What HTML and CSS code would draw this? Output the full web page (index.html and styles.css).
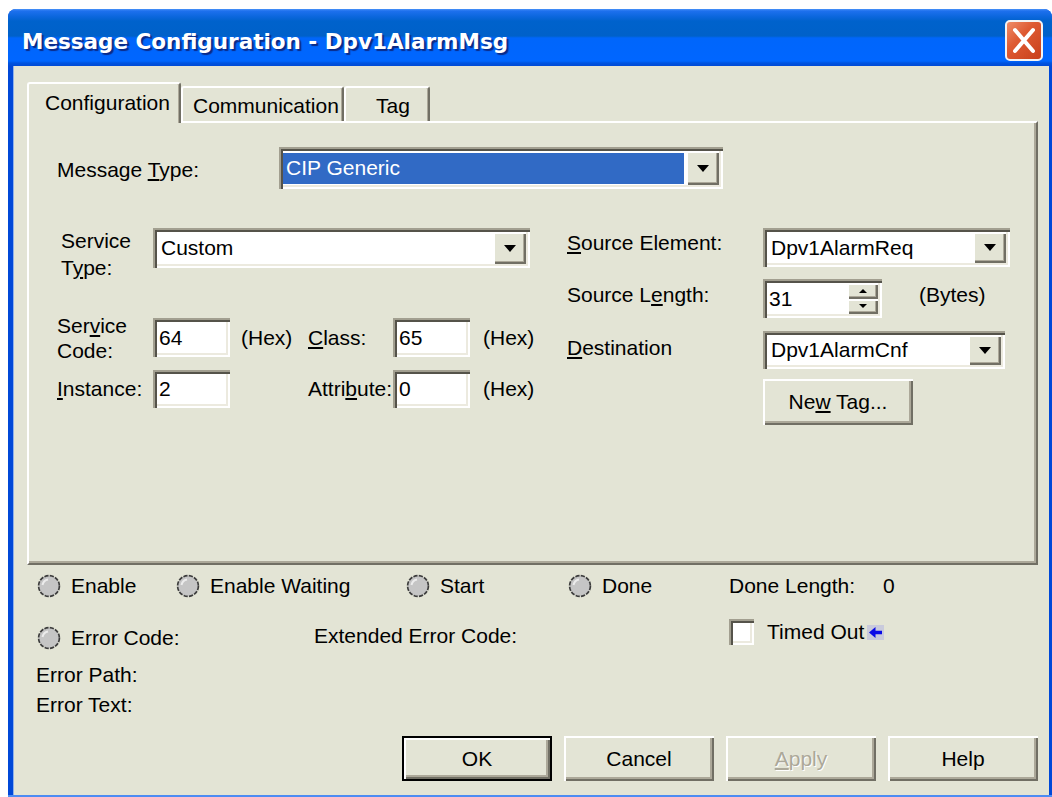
FILE: index.html
```html
<!DOCTYPE html>
<html lang="en">
<head>
<meta charset="utf-8">
<title>Message Configuration - Dpv1AlarmMsg</title>
<link rel="stylesheet" href="styles.css">
</head>
<body>
<div class="window">
  <div class="titlebar">
    <div class="title">Message Configuration - Dpv1AlarmMsg</div>
    <div class="close-btn">
      <svg width="34" height="37" viewBox="0 0 34 37"><path d="M8 8 L26 29 M26 8 L8 29" stroke="#fff" stroke-width="4" stroke-linecap="round"/></svg>
    </div>
  </div>
  <div class="client">
    <div class="tabs">
      <div class="tab tab-active tab-config">Configuration</div>
      <div class="tab tab-comm">Communication</div>
      <div class="tab tab-tag">Tag</div>
    </div>
    <div class="panel">
      <div class="msg-row">
        <div class="msg-label">Message <u>T</u>ype:</div>
        <div class="combo msg-combo">
          <div class="combo-value selected">CIP Generic</div>
          <div class="drop-btn"><span class="tri-down"></span></div>
        </div>
      </div>
      <div class="columns">
        <div class="col-left">
          <div class="lrow row-st">
            <div class="lbl lbl-st">Service<br>T<u>y</u>pe:</div>
            <div class="combo st-combo">
              <div class="combo-value">Custom</div>
              <div class="drop-btn"><span class="tri-down"></span></div>
            </div>
          </div>
          <div class="lrow row-sc">
            <div class="lbl lbl-sc">Ser<u>v</u>ice<br>Code:</div>
            <div class="edit">64</div>
            <div class="unit">(Hex)</div>
            <div class="lbl2"><u>C</u>lass:</div>
            <div class="edit">65</div>
            <div class="unit2">(Hex)</div>
          </div>
          <div class="lrow row-in">
            <div class="lbl"><u>I</u>nstance:</div>
            <div class="edit">2</div>
            <div class="unit"></div>
            <div class="lbl2">Attri<u>b</u>ute:</div>
            <div class="edit">0</div>
            <div class="unit2">(Hex)</div>
          </div>
        </div>
        <div class="col-right">
          <div class="rrow row-se">
            <div class="rlbl"><u>S</u>ource Element:</div>
            <div class="combo se-combo">
              <div class="combo-value">Dpv1AlarmReq</div>
              <div class="drop-btn"><span class="tri-down"></span></div>
            </div>
          </div>
          <div class="rrow row-sl">
            <div class="rlbl">Source L<u>e</u>ngth:</div>
            <div class="spin">
              <div class="spin-value">31</div>
              <div class="spin-btns">
                <div class="spin-btn"><span class="tri-up"></span></div>
                <div class="spin-btn"><span class="tri-down-sm"></span></div>
              </div>
            </div>
            <div class="bytes">(Bytes)</div>
          </div>
          <div class="rrow row-dest">
            <div class="rlbl"><u>D</u>estination</div>
            <div class="combo dest-combo">
              <div class="combo-value">Dpv1AlarmCnf</div>
              <div class="drop-btn"><span class="tri-down"></span></div>
            </div>
          </div>
          <div class="btn newtag"><span>Ne<u>w</u> Tag...</span></div>
        </div>
      </div>
    </div>

    <div class="status">
      <div class="srow1">
        <div class="sitem s-enable"><svg class="radio" width="24" height="24" viewBox="0 0 24 24"><circle cx="12" cy="12" r="10.4" fill="#c5c5c5" stroke="#3c3c3c" stroke-width="1.7" stroke-dasharray="4.2 1.3"/><path d="M5.5 11 A7 7 0 0 1 11 5.5" stroke="#ececec" stroke-width="2" fill="none"/></svg>Enable</div>
        <div class="sitem s-waiting"><svg class="radio" width="24" height="24" viewBox="0 0 24 24"><circle cx="12" cy="12" r="10.4" fill="#c5c5c5" stroke="#3c3c3c" stroke-width="1.7" stroke-dasharray="4.2 1.3"/><path d="M5.5 11 A7 7 0 0 1 11 5.5" stroke="#ececec" stroke-width="2" fill="none"/></svg>Enable Waiting</div>
        <div class="sitem s-start"><svg class="radio" width="24" height="24" viewBox="0 0 24 24"><circle cx="12" cy="12" r="10.4" fill="#c5c5c5" stroke="#3c3c3c" stroke-width="1.7" stroke-dasharray="4.2 1.3"/><path d="M5.5 11 A7 7 0 0 1 11 5.5" stroke="#ececec" stroke-width="2" fill="none"/></svg>Start</div>
        <div class="sitem s-done"><svg class="radio" width="24" height="24" viewBox="0 0 24 24"><circle cx="12" cy="12" r="10.4" fill="#c5c5c5" stroke="#3c3c3c" stroke-width="1.7" stroke-dasharray="4.2 1.3"/><path d="M5.5 11 A7 7 0 0 1 11 5.5" stroke="#ececec" stroke-width="2" fill="none"/></svg>Done</div>
        <div class="sitem">Done Length:<span class="done-len">0</span></div>
      </div>
      <div class="srow2">
        <div class="sitem s-error"><svg class="radio" width="24" height="24" viewBox="0 0 24 24"><circle cx="12" cy="12" r="10.4" fill="#c5c5c5" stroke="#3c3c3c" stroke-width="1.7" stroke-dasharray="4.2 1.3"/><path d="M5.5 11 A7 7 0 0 1 11 5.5" stroke="#ececec" stroke-width="2" fill="none"/></svg>Error Code:</div>
        <div class="s-ext">Extended Error Code:</div>
        <div class="checkbox"></div>
        <div class="s-timed">Timed Out</div>
        <svg class="hint" width="17" height="15" viewBox="0 0 17 15"><rect width="17" height="15" fill="#c9cadc"/><path d="M2 7.5 L8.5 2 L8.5 5.8 L15 5.8 L15 9.2 L8.5 9.2 L8.5 13 Z" fill="#0a0ae6"/></svg>
      </div>
      <div class="srow3">Error Path:</div>
      <div class="srow4">Error Text:</div>
    </div>

    <div class="buttons">
      <div class="btn btn-default">OK</div>
      <div class="btn">Cancel</div>
      <div class="btn btn-disabled"><span><u>A</u>pply</span></div>
      <div class="btn">Help</div>
    </div>
  </div>
</div>
</body>
</html>
```

FILE: styles.css
```css
* { box-sizing: border-box; }

html, body {
  margin: 0;
  padding: 0;
  background: #fff;
}

body {
  font-family: "Liberation Sans", Arial, sans-serif;
  font-size: 21px;
  color: #000;
}

u {
  text-decoration-thickness: 1.5px;
  text-underline-offset: 2px;
}

/* ---------- window frame ---------- */
.window {
  margin: 9px 0 0 8px;
  width: 1044px;
  height: 788px;
  display: flex;
  flex-direction: column;
  background: #0048d8;
  border-bottom: 2px solid #4d8cf2;
  border-radius: 8px 8px 0 0;
  overflow: hidden;
}

.titlebar {
  flex: none;
  height: 57px;
  display: flex;
  align-items: flex-start;
  padding: 0 9px 0 14px;
  background: linear-gradient(to bottom,
    #4a93f8 0, #1d70ee 2px, #0a66dc 8px, #0062cc 12px,
    #0061c9 27px, #0066fb 29px, #0066ff 52px,
    #0054e0 54px, #004ad6 57px);
}

.title {
  flex: 1;
  margin-top: 20px;
  font-family: "DejaVu Sans", sans-serif;
  font-weight: bold;
  font-size: 21.5px;
  line-height: 26px;
  color: #fff;
  white-space: nowrap;
  text-shadow: 2px 2px 1px #0b2a86;
}

.close-btn {
  margin-top: 11px;
  width: 38px;
  height: 41px;
  border: 2px solid #f4f4f4;
  border-radius: 5px;
  background: linear-gradient(135deg, #ef8c68 0%, #de5a32 40%, #c8401c 100%);
  display: flex;
  align-items: center;
  justify-content: center;
}

.client {
  flex: 1;
  margin: 0 3px 0 5px;
  border-left: 1px solid #8fb0ea;
  background: #e3e4d5;
  padding: 16px 11px 0 13px;
  display: flex;
  flex-direction: column;
}

/* ---------- tabs ---------- */
.tabs {
  flex: none;
  height: 39px;
  display: flex;
  align-items: flex-end;
  position: relative;
  z-index: 1;
}

.tab {
  height: 35px;
  border-top: 2px solid #fff;
  border-left: 2px solid #fff;
  border-right: 2px solid #716f64;
  border-radius: 3px 3px 0 0;
  box-shadow: inset -1px 0 0 #aca899;
  background: #e3e4d5;
  padding-top: 4.8px;
  line-height: 26px;
  white-space: nowrap;
}

.tab-active {
  height: 41px;
  margin-bottom: -2px;
  padding-top: 5.5px;
}

.tab-config { width: 154px; padding-left: 16px; }
.tab-comm { width: 163px; padding-left: 10px; }
.tab-tag { width: 86px; padding-left: 30px; }

.panel {
  flex: none;
  height: 444px;
  border: 2px solid;
  border-color: #fff #716f64 #716f64 #fff;
  box-shadow: inset -2px -2px 0 #aca899;
  padding: 24px 0 0 28px;
}

/* ---------- shared controls ---------- */
.combo,
.edit,
.spin,
.checkbox {
  background: #fff;
  box-shadow:
    inset 2px 2px 0 #a29f90,
    inset 4px 4px 0 #55534a,
    inset -2px -2px 0 #fff,
    inset -4px -4px 0 #eceadf;
}

.combo {
  display: flex;
  padding: 4px;
}

.combo-value {
  flex: 1;
  display: flex;
  align-items: center;
  padding-left: 4px;
  white-space: nowrap;
}

.combo-value.selected {
  background: #316ac5;
  color: #fff;
  margin: 1.5px 2px 1.5px 0;
  padding-left: 3px;
}

.drop-btn,
.spin-btn {
  background: #e3e4d5;
  box-shadow:
    inset 2px 2px 0 #fff,
    inset -2px -2px 0 #716f64,
    inset -3px -3px 0 #aca899;
  display: flex;
  align-items: center;
  justify-content: center;
}

.drop-btn { width: 33px; }

.tri-down {
  width: 0;
  height: 0;
  border-left: 6px solid transparent;
  border-right: 6px solid transparent;
  border-top: 7px solid #000;
}

.tri-up {
  width: 0;
  height: 0;
  border-left: 4px solid transparent;
  border-right: 4px solid transparent;
  border-bottom: 4px solid #000;
}

.tri-down-sm {
  width: 0;
  height: 0;
  border-left: 4px solid transparent;
  border-right: 4px solid transparent;
  border-top: 4px solid #000;
}

.edit {
  width: 77px;
  height: 39px;
  padding-left: 6px;
  line-height: 39px;
}

.btn {
  width: 150px;
  height: 45px;
  display: flex;
  align-items: center;
  justify-content: center;
  background: #e3e4d5;
  box-shadow:
    inset 2px 2px 0 #fff,
    inset -2px -2px 0 #716f64,
    inset -4px -4px 0 #aca899;
  white-space: nowrap;
}

.btn-default {
  border: 2px solid #000;
}

.btn-disabled {
  color: #aca899;
  text-shadow: 1px 1px 0 #fff;
}

/* ---------- message type ---------- */
.msg-row {
  display: flex;
  align-items: center;
  height: 42px;
}

.msg-label {
  width: 222px;
  margin-top: 4px;
}

.msg-combo {
  width: 444px;
  height: 42px;
}

.columns {
  display: flex;
  margin-top: 39px;
}

/* ---------- left column ---------- */
.col-left { width: 510px; }

.lrow {
  display: flex;
  align-items: center;
}

.lbl {
  width: 96px;
  white-space: nowrap;
}

.row-st {
  height: 40px;
  align-items: flex-start;
}

.lbl-st {
  padding-left: 4px;
  line-height: 26.5px;
}

.st-combo {
  width: 377px;
  height: 40px;
}

.row-sc {
  margin-top: 50px;
  height: 39px;
}

.lbl-sc {
  align-self: flex-start;
  margin-top: -5.5px;
  line-height: 25.5px;
}

.row-in {
  margin-top: 13px;
  height: 38px;
}

.row-in .edit {
  height: 38px;
  line-height: 38px;
}

.unit {
  width: 78px;
  padding-left: 11px;
}

.lbl2 {
  width: 85px;
  white-space: nowrap;
}

.unit2 {
  padding-left: 13px;
}

/* ---------- right column ---------- */
.col-right { flex: 1; }

.rrow {
  display: flex;
  align-items: flex-start;
}

.rlbl {
  width: 196px;
  line-height: 26px;
  white-space: nowrap;
}

.row-se .rlbl { margin-top: 2px; }

.se-combo {
  width: 247px;
  height: 39px;
}

.row-sl { margin-top: 12px; }
.row-sl .rlbl { margin-top: 3px; }

.spin {
  width: 119px;
  height: 39px;
  display: flex;
  padding: 4px;
}

.spin-value {
  flex: 1;
  padding-left: 2px;
  line-height: 31px;
}

.spin-btns {
  width: 31px;
  display: flex;
  flex-direction: column;
}

.spin-btn { flex: 1; }

.bytes {
  margin: 3px 0 0 37px;
  line-height: 26px;
}

.row-dest { margin-top: 13px; }
.row-dest .rlbl { margin-top: 3.5px; }

.dest-combo {
  width: 242px;
  height: 38px;
}

.newtag {
  margin: 10px 0 0 196px;
  height: 46px;
}

/* ---------- status area ---------- */
.status {
  padding-left: 9px;
  display: flex;
  flex-direction: column;
}

.srow1 {
  display: flex;
  align-items: center;
  height: 24px;
  margin-top: 9px;
}

.sitem {
  display: flex;
  align-items: center;
  gap: 10px;
  line-height: 26px;
  white-space: nowrap;
}

.radio { flex: none; }

.s-enable { width: 139px; margin-left: 1px; }
.s-waiting { width: 230px; }
.s-start { width: 162px; }
.s-done { width: 161px; }

.done-len { margin-left: 18px; }

.srow2 {
  display: flex;
  align-items: flex-start;
  margin-top: 21px;
}

.s-error {
  width: 277px;
  margin: 5.5px 0 0 1px;
}

.s-ext {
  width: 415px;
  margin-top: 3.5px;
  line-height: 26px;
}

.checkbox {
  width: 25px;
  height: 26px;
  margin-right: 13px;
}

.s-timed {
  line-height: 26px;
}

.hint {
  margin: 6px 0 0 3px;
}

.srow3 {
  margin-top: 11.5px;
  line-height: 26px;
}

.srow4 {
  margin-top: 4px;
  line-height: 26px;
}

/* ---------- dialog buttons ---------- */
.buttons {
  display: flex;
  justify-content: flex-end;
  gap: 12px;
  margin-top: 18px;
}
```
